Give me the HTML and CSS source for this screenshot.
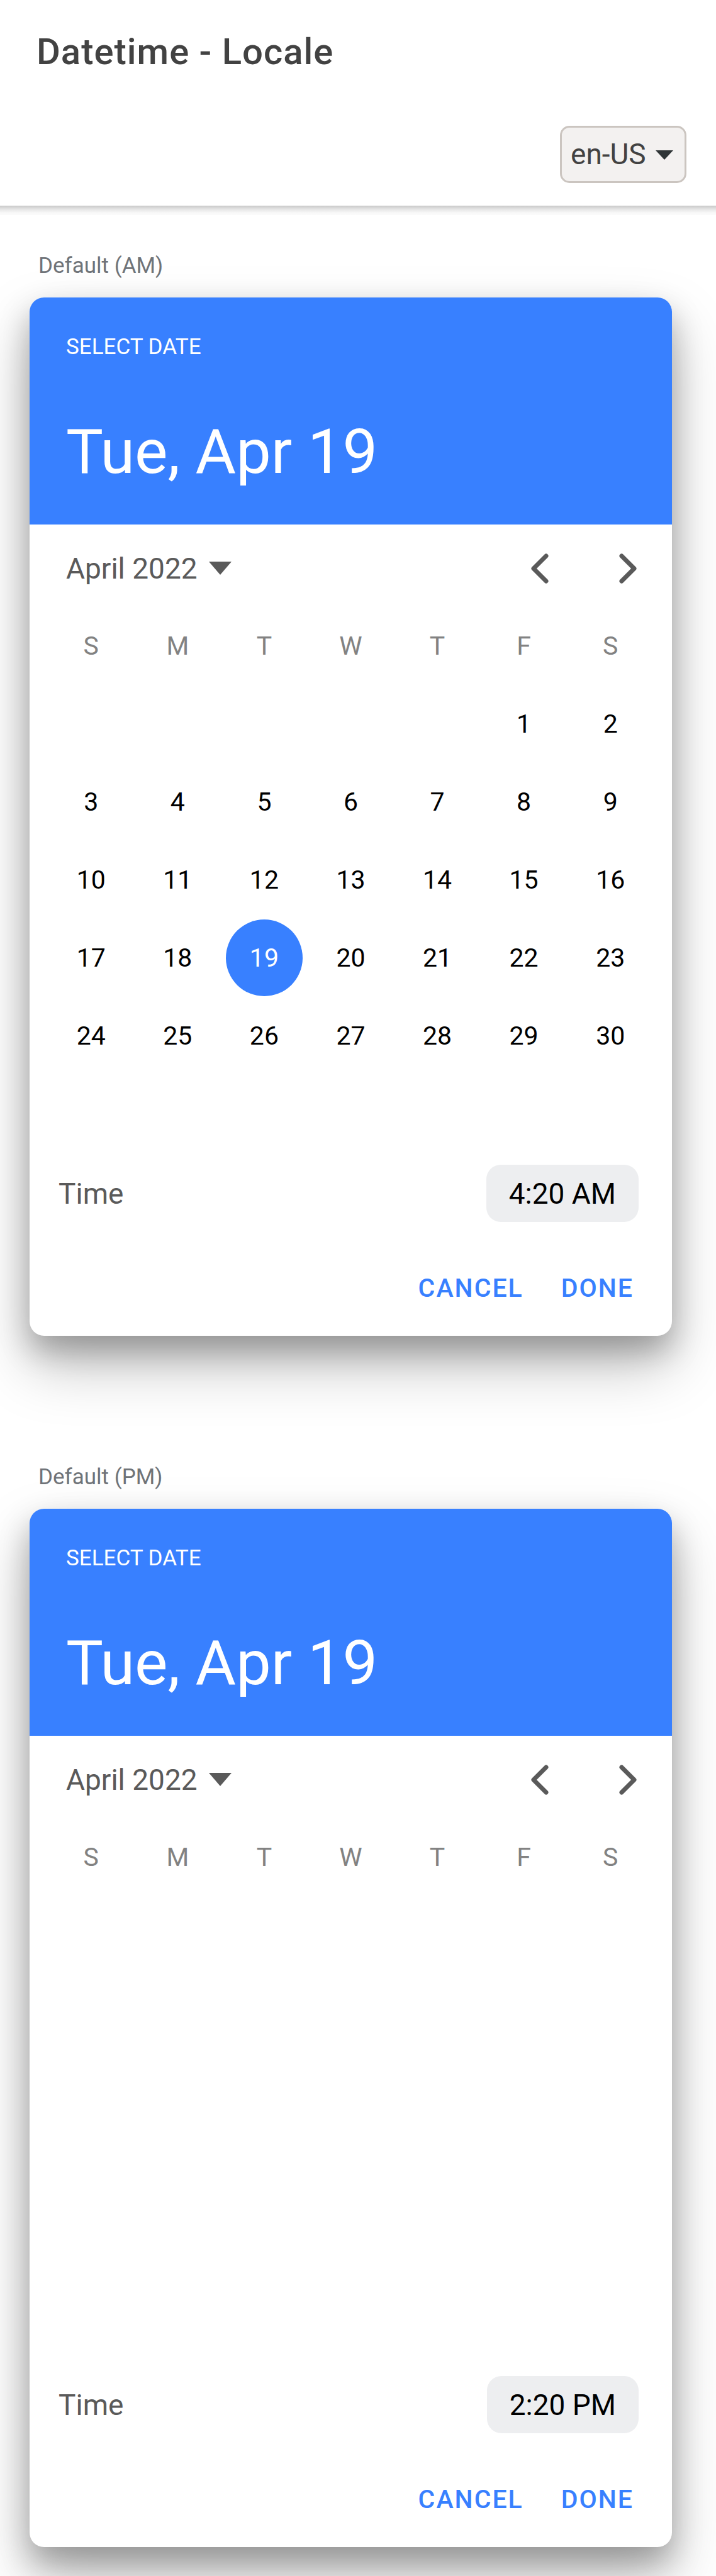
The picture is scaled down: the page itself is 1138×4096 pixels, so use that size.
FILE: index.html
```html
<!DOCTYPE html>
<html lang="en-US">
<head>
<meta charset="utf-8">
<title>Datetime - Locale</title>
<meta name="viewport" content="width=device-width, initial-scale=1">
<link rel="stylesheet" href="styles.css">
</head>
<body>
<header class="header">
  <div class="toolbar"><h1 class="title">Datetime - Locale</h1></div>
  <div class="toolbar toolbar-end">
    <div class="locale">
      <select class="locale-select" aria-label="Locale">
        <option selected>en-US</option>
        <option>en-GB</option>
        <option>es-ES</option>
      </select>
      <svg class="locale-arrow" viewBox="0 0 28 15" aria-hidden="true"><path d="M0 0h28L14 15z"/></svg>
    </div>
  </div>
</header>
<main class="content">
  <section class="example">
    <h2 class="label">Default (AM)</h2>
    <div class="datetime">
      <div class="datetime-header">
        <div class="datetime-hint">SELECT DATE</div>
        <div class="datetime-date">Tue, Apr 19</div>
      </div>
      <div class="nav">
        <button class="month" type="button">April 2022
          <svg class="month-arrow" viewBox="0 0 36 21" aria-hidden="true"><path d="M0 0h36L18 21z"/></svg>
        </button>
        <button class="step" type="button" aria-label="Previous month"><svg class="chevron" viewBox="0 0 46 46" aria-hidden="true"><path d="M33 3 13 23l20 20"/></svg></button>
        <button class="step" type="button" aria-label="Next month"><svg class="chevron" viewBox="0 0 46 46" aria-hidden="true"><path d="m13 3 20 20-20 20"/></svg></button>
      </div>
      <div class="calendar">
        <table class="days">
          <thead><tr><th>S</th><th>M</th><th>T</th><th>W</th><th>T</th><th>F</th><th>S</th></tr></thead>
          <tbody>
            <tr><td></td><td></td><td></td><td></td><td></td><td><button class="day" type="button">1</button></td><td><button class="day" type="button">2</button></td></tr>
            <tr><td><button class="day" type="button">3</button></td><td><button class="day" type="button">4</button></td><td><button class="day" type="button">5</button></td><td><button class="day" type="button">6</button></td><td><button class="day" type="button">7</button></td><td><button class="day" type="button">8</button></td><td><button class="day" type="button">9</button></td></tr>
            <tr><td><button class="day" type="button">10</button></td><td><button class="day" type="button">11</button></td><td><button class="day" type="button">12</button></td><td><button class="day" type="button">13</button></td><td><button class="day" type="button">14</button></td><td><button class="day" type="button">15</button></td><td><button class="day" type="button">16</button></td></tr>
            <tr><td><button class="day" type="button">17</button></td><td><button class="day" type="button">18</button></td><td><button class="day day-active" type="button" aria-pressed="true">19</button></td><td><button class="day" type="button">20</button></td><td><button class="day" type="button">21</button></td><td><button class="day" type="button">22</button></td><td><button class="day" type="button">23</button></td></tr>
            <tr><td><button class="day" type="button">24</button></td><td><button class="day" type="button">25</button></td><td><button class="day" type="button">26</button></td><td><button class="day" type="button">27</button></td><td><button class="day" type="button">28</button></td><td><button class="day" type="button">29</button></td><td><button class="day" type="button">30</button></td></tr>
          </tbody>
        </table>
      </div>
      <div class="time">
        <span>Time</span>
        <button class="time-value" type="button">4:20 AM</button>
      </div>
      <div class="actions">
        <button class="action" type="button">CANCEL</button>
        <button class="action" type="button">DONE</button>
      </div>
    </div>
  </section>
  <section class="example">
    <h2 class="label">Default (PM)</h2>
    <div class="datetime">
      <div class="datetime-header">
        <div class="datetime-hint">SELECT DATE</div>
        <div class="datetime-date">Tue, Apr 19</div>
      </div>
      <div class="nav">
        <button class="month" type="button">April 2022
          <svg class="month-arrow" viewBox="0 0 36 21" aria-hidden="true"><path d="M0 0h36L18 21z"/></svg>
        </button>
        <button class="step" type="button" aria-label="Previous month"><svg class="chevron" viewBox="0 0 46 46" aria-hidden="true"><path d="M33 3 13 23l20 20"/></svg></button>
        <button class="step" type="button" aria-label="Next month"><svg class="chevron" viewBox="0 0 46 46" aria-hidden="true"><path d="m13 3 20 20-20 20"/></svg></button>
      </div>
      <div class="calendar">
        <table class="days">
          <thead><tr><th>S</th><th>M</th><th>T</th><th>W</th><th>T</th><th>F</th><th>S</th></tr></thead>
        </table>
      </div>
      <div class="time">
        <span>Time</span>
        <button class="time-value" type="button">2:20 PM</button>
      </div>
      <div class="actions">
        <button class="action" type="button">CANCEL</button>
        <button class="action" type="button">DONE</button>
      </div>
    </div>
  </section>
</main>
</body>
</html>
```

FILE: styles.css
```css
* {
  box-sizing: border-box;
}

body {
  margin: 0;
  background: #fff;
  color: #000;
  font-family: Roboto, "Liberation Sans", sans-serif;
}

button,
select {
  margin: 0;
  padding: 0;
  border: 0;
  background: none;
  color: inherit;
  font: inherit;
}

/* Header */
.header {
  position: relative;
}

.header::after {
  content: "";
  position: absolute;
  top: 100%;
  left: 0;
  right: 0;
  height: 15px;
  background: linear-gradient(#c9c9c9, #e6e6e6 40%, #f8f8f8 75%, #fbfbfb);
}

.toolbar {
  display: flex;
  align-items: center;
  height: 163px;
  padding: 0 47px 0 58px;
}

.toolbar-end {
  height: 164px;
  justify-content: flex-end;
}

.title {
  margin: 0;
  color: #424242;
  font-size: 58px;
  font-weight: 500;
  line-height: 70px;
  letter-spacing: 1px;
}

.locale {
  position: relative;
}

.locale-select {
  display: block;
  width: 201px;
  height: 91px;
  padding: 0 46px 0 14px;
  border: 3px solid #cbc5c0;
  border-radius: 15px;
  background: #f3f1f0;
  color: #424242;
  font-size: 46px;
  appearance: none;
}

.locale-arrow {
  position: absolute;
  top: 39px;
  right: 21px;
  width: 28px;
  height: 15px;
  fill: #2e3436;
  pointer-events: none;
}

/* Examples */
.content {
  display: grid;
  gap: 204px;
  padding: 75px 47px 46px;
}

.label {
  margin: 0 0 30px;
  padding-left: 14px;
  color: #6f7378;
  font-size: 35px;
  font-weight: 400;
  line-height: 41px;
}

.datetime {
  max-width: 1021px;
  overflow: hidden;
  border-radius: 23px;
  background: #fff;
  box-shadow: 0 47px 93px rgba(0, 0, 0, 0.25), 0 23px 47px rgba(0, 0, 0, 0.25);
}

.datetime-header {
  display: grid;
  gap: 88px;
  padding: 59px 58px 58px;
  background: #3880ff;
  color: #fff;
}

.datetime-hint {
  font-size: 35px;
  line-height: 40px;
}

.datetime-date {
  font-size: 99px;
  line-height: 116px;
}

/* Month navigation */
.nav {
  display: flex;
  align-items: center;
  height: 131px;
  padding-top: 8px;
  color: #5a5a5a;
}

.month {
  display: flex;
  align-items: center;
  gap: 18px;
  margin-right: auto;
  padding-left: 58px;
  font-size: 46px;
}

.month-arrow {
  width: 36px;
  height: 21px;
  fill: currentColor;
}

.step {
  display: flex;
  align-items: center;
  justify-content: center;
  width: 140px;
  height: 100px;
}

.chevron {
  width: 46px;
  height: 46px;
  fill: none;
  stroke: currentColor;
  stroke-width: 7;
  stroke-linecap: round;
  stroke-linejoin: round;
  overflow: visible;
}

/* Calendar grid */
.calendar {
  min-height: 868px;
  padding: 0 29px;
}

.days {
  width: 100%;
  border-collapse: collapse;
  table-layout: fixed;
  font-size: 41px;
}

.days th,
.days td {
  height: 124px;
  padding: 0;
  text-align: center;
  vertical-align: middle;
}

.days th {
  color: #828282;
  font-weight: 400;
}

.day {
  display: block;
  width: 122px;
  height: 122px;
  margin: 0 auto;
  border-radius: 50%;
}

.day-active {
  background: #3880ff;
  color: #fff;
}

/* Time row and buttons */
.time {
  display: flex;
  align-items: center;
  justify-content: space-between;
  padding: 19px 53px 0 46px;
  color: #5a5a5a;
  font-size: 46px;
}

.time-value {
  height: 91px;
  padding: 0 36px;
  border-radius: 23px;
  background: #edeef0;
  color: #000;
}

.actions {
  display: flex;
  justify-content: flex-end;
  padding: 58px 31px 29px;
}

.action {
  height: 94px;
  padding: 0 30px;
  color: #3880ff;
  font-size: 41px;
  font-weight: 500;
  letter-spacing: 2px;
}
```
